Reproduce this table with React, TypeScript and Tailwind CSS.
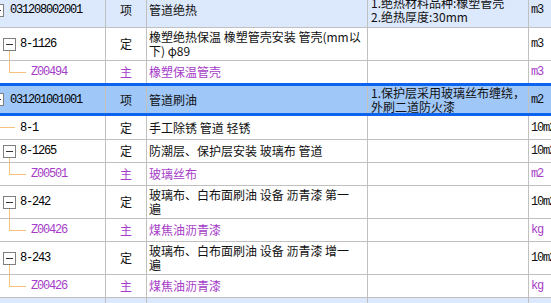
import React from "react";

type Row = {
  code: string;
  level: 0 | 1 | 2;
  kind: string;
  name: string[];
  desc?: string[];
  unit: string;
  h: string;
  kids?: boolean;
  selected?: boolean;
  tint?: boolean;
  noBorder?: boolean;
};

const ROWS: Row[] = [
  { code: "031208002001", level: 0, kind: "项", name: ["管道绝热"], desc: ["1.绝热材料品种:橡塑管壳", "2.绝热厚度:30mm"], unit: "m3", h: "h-[35px]", tint: true },
  { code: "8-1126", level: 1, kind: "定", name: ["橡塑绝热保温 橡塑管壳安装 管壳(mm以", "下) φ89"], unit: "m3", h: "h-[33px]", kids: true },
  { code: "Z00494", level: 2, kind: "主", name: ["橡塑保温管壳"], unit: "m3", h: "h-[22px]", noBorder: true },
  { code: "031201001001", level: 0, kind: "项", name: ["管道刷油"], desc: ["1.保护层采用玻璃丝布缠绕，", "外刷二道防火漆"], unit: "m2", h: "h-[33px]", selected: true },
  { code: "8-1", level: 1, kind: "定", name: ["手工除锈 管道 轻锈"], unit: "10m2", h: "h-[24px]" },
  { code: "8-1265", level: 1, kind: "定", name: ["防潮层、保护层安装 玻璃布 管道"], unit: "10m2", h: "h-[23px]", kids: true },
  { code: "Z00501", level: 2, kind: "主", name: ["玻璃丝布"], unit: "m2", h: "h-[23px]" },
  { code: "8-242", level: 1, kind: "定", name: ["玻璃布、白布面刷油 设备 沥青漆 第一", "遍"], unit: "10m2", h: "h-[33px]", kids: true },
  { code: "Z00426", level: 2, kind: "主", name: ["煤焦油沥青漆"], unit: "kg", h: "h-[23px]" },
  { code: "8-243", level: 1, kind: "定", name: ["玻璃布、白布面刷油 设备 沥青漆 增一", "遍"], unit: "10m2", h: "h-[33px]", kids: true },
  { code: "Z00426", level: 2, kind: "主", name: ["煤焦油沥青漆"], unit: "kg", h: "h-[23px]" },
  { code: "031001002001", level: 0, kind: "项", name: ["钢管"], desc: ["1.安装部位:室内", "2.介质:给水"], unit: "m", h: "h-[40px]", tint: true },
];

const mono = "font-['Liberation_Mono',monospace] text-[12px] tracking-[-1.2px]";

function Box({ className = "" }: { className?: string }) {
  return (
    <span className={`relative flex h-[13px] w-[13px] shrink-0 items-center justify-center border border-[#7f7f7f] bg-white ${className}`}>
      <span className="h-px w-[7px] bg-[#333]" />
    </span>
  );
}

function TreeCell({ r }: { r: Row }) {
  return (
    <div className="relative flex h-full w-[106px] shrink-0 items-center overflow-hidden border-r border-[#c0c0c0]">
      {r.level === 0 && (
        <>
          <Box className="ml-[-9px]" />
          <span className={`ml-[6px] text-black ${mono}`}>{r.code}</span>
        </>
      )}
      {r.level === 1 && r.kids && (
        <>
          <span className="absolute left-[9px] top-1/2 mt-[6px] h-[30px] w-px bg-[#f4c27c]" />
          <Box className="ml-[3px]" />
          <span className={`ml-[4px] text-black ${mono}`}>{r.code}</span>
        </>
      )}
      {r.level === 1 && !r.kids && (
        <>
          <span className="h-px w-[15px] bg-[#f4c27c]" />
          <span className={`ml-[5px] text-black ${mono}`}>{r.code}</span>
        </>
      )}
      {r.level === 2 && (
        <>
          <span className="absolute left-[9px] top-[-1px] h-[calc(50%+1px)] w-px bg-[#f4c27c]" />
          <span className="ml-[9px] h-px w-[17px] bg-[#f4c27c]" />
          <span className={`ml-[5px] text-[#a63cc8] ${mono}`}>{r.code}</span>
        </>
      )}
    </div>
  );
}

function GridRow({ r }: { r: Row }) {
  const tone = r.level === 2 ? "text-[#a63cc8]" : "text-[#111]";
  let bg = "bg-white";
  if (r.tint) bg = "bg-[#dce8fc]";
  if (r.selected) bg = "bg-[#9fc7f8]";
  const border = r.selected
    ? "border-y-[3px] border-[#0b63ee]"
    : r.noBorder
    ? ""
    : "border-b border-[#c0c0c0]";
  return (
    <div className={`flex ${r.h} ${bg} ${border} box-border`}>
      <TreeCell r={r} />
      <div className={`flex w-[41px] shrink-0 items-center justify-center border-r border-[#c0c0c0] text-[12px] ${tone}`}>
        {r.kind}
      </div>
      <div className={`flex w-[221px] shrink-0 flex-col justify-center overflow-hidden border-r border-[#c0c0c0] pl-[2px] text-[12px] leading-[14px] ${tone}`}>
        {r.name.map((t, i) => (
          <div key={i} className="whitespace-pre">{t}</div>
        ))}
      </div>
      <div className={`flex w-[161px] shrink-0 flex-col justify-center overflow-hidden border-r border-[#c0c0c0] pl-[3px] text-[12px] leading-[14px] ${tone}`}>
        {(r.desc ?? []).map((t, i) => (
          <div key={i} className="whitespace-pre">{t}</div>
        ))}
      </div>
      <div className={`flex w-[60px] shrink-0 items-center pl-[2px] ${mono} ${tone}`}>{r.unit}</div>
    </div>
  );
}

export default function App() {
  return (
    <div className="h-[303px] w-[551px] overflow-hidden bg-white font-['Noto_Sans_CJK_SC',sans-serif]">
      <div className="mt-[-7px] w-[600px]">
        {ROWS.map((r, i) => (
          <GridRow key={i} r={r} />
        ))}
      </div>
    </div>
  );
}
